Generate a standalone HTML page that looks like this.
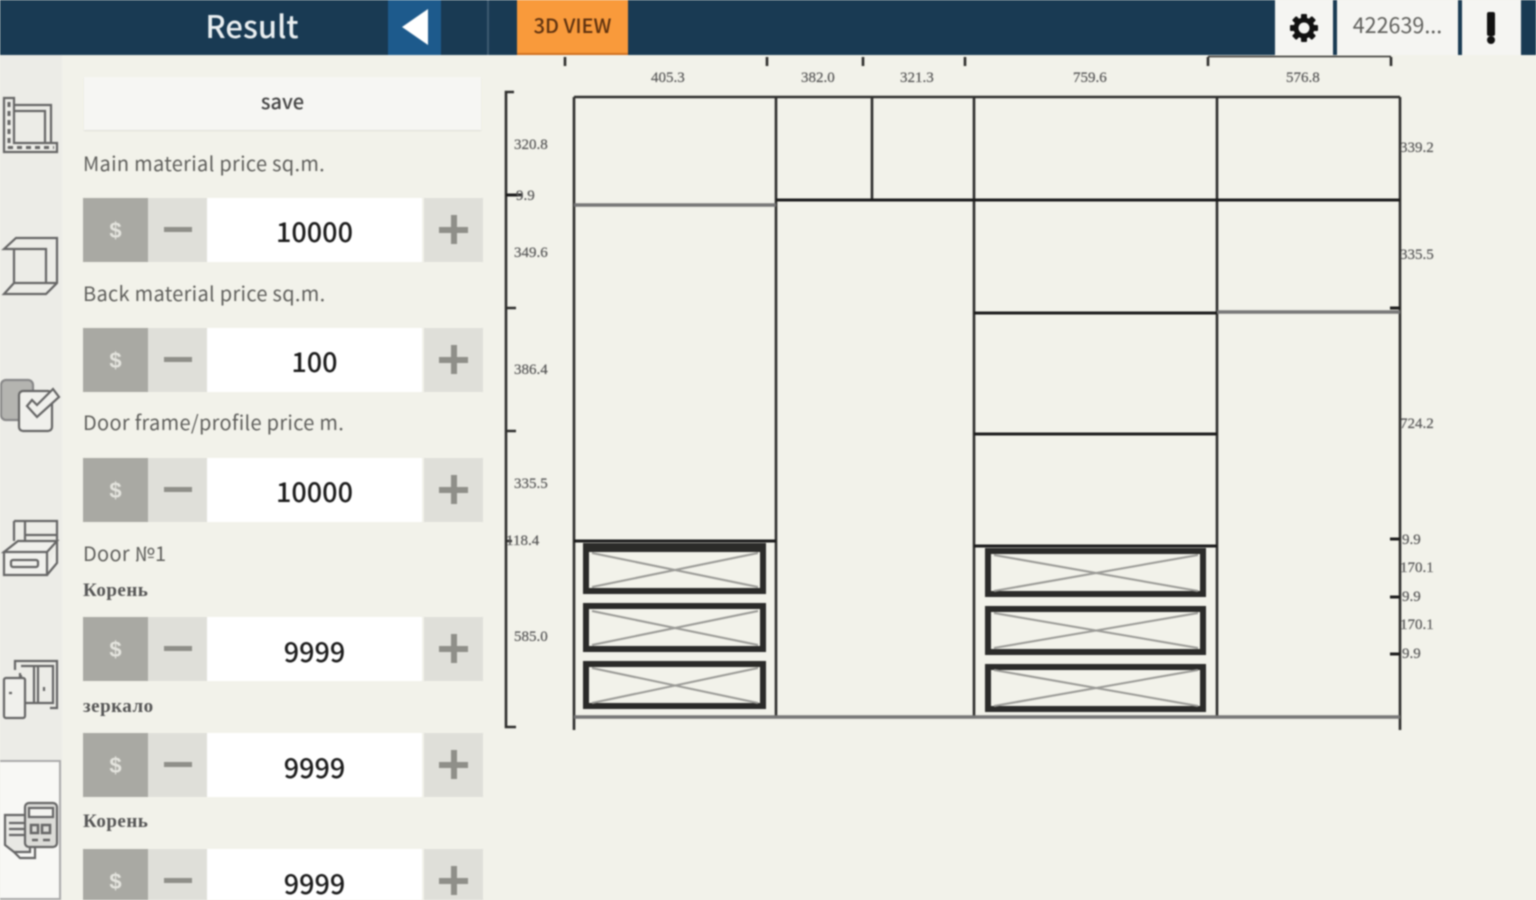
<!DOCTYPE html>
<html><head><meta charset="utf-8"><title>Result</title>
<style>
html,body{margin:0;padding:0;width:1536px;height:900px;overflow:hidden;background:#f2f2ea}
body{position:relative;font-family:"Noto Sans CJK JP","Liberation Sans",sans-serif}
#w{position:absolute;left:0;top:0;width:1536px;height:900px;overflow:hidden;filter:blur(.75px)}
.a{position:absolute}
.t{position:absolute;white-space:nowrap;color:#5f5f5c;font-size:20px;letter-spacing:.3px;line-height:26px;left:83px}
.c{position:absolute;white-space:nowrap;left:83px;color:#555;font:bold 19px/22px "Liberation Serif",serif;letter-spacing:.5px}
.s{position:absolute;left:83px;width:400px;height:64px}
.s i{position:absolute;top:0;height:64px;display:block;font-style:normal}
.d{left:0;width:65px;background:#a9a9a3;color:#e4e4de;font:bold 22px/66px "Liberation Sans",sans-serif;text-align:center}
.m{left:65px;width:59px;background:#dfdfd9}
.m:after{content:"";position:absolute;left:16px;top:29px;width:28px;height:5px;background:#8f8f89}
.v{left:124px;width:215px;background:#fff;color:#1c1c1c;font-size:27px;font-weight:500;line-height:66px;text-align:center}
.p{left:341px;width:59px;background:#dfdfd9}
.p:before{content:"";position:absolute;left:15px;top:29px;width:29px;height:6px;background:#8f8f89}
.p:after{content:"";position:absolute;left:27px;top:17px;width:6px;height:29px;background:#8f8f89}
.tab{position:absolute;top:0;height:55px;background:#f5f5f2}
svg text{font-family:"Liberation Serif",serif;font-size:15px;fill:#555;stroke:#666;stroke-width:.25}
</style></head><body><div id="w">

<div class="a" style="left:0;top:0;width:1536px;height:55px;background:#193a53"></div>
<div class="a" style="left:0;top:55px;width:62px;height:845px;background:#ecece7"></div>

<div class="a" style="left:140px;width:224px;top:0;height:50px;text-align:center;color:#e9eef0;font-size:31px;font-weight:500;line-height:50px">Result</div>
<div class="a" style="left:388px;top:0;width:53px;height:55px;background:#1d5a8c"></div>
<svg class="a" style="left:388px;top:0" width="53" height="54"><polygon points="14,27 40,9 40,45" fill="#fff"/></svg>
<div class="a" style="left:487px;top:0;width:2px;height:55px;background:#3d5a70"></div>
<div class="a" style="left:517px;top:0;width:111px;height:55px;background:#f99a3b;border-bottom:2px solid #d0701f;box-sizing:border-box;text-align:center;color:#5e3210;font-size:20px;line-height:49px;font-weight:500">3D VIEW</div>

<div class="tab" style="left:1275px;width:58px"></div>
<svg class="a" style="left:1289px;top:13px" width="30" height="30" viewBox="0 0 30 30"><g fill="#111"><circle cx="15" cy="15" r="10.5"/><rect x="12" y="1" width="6" height="28" rx="1"/><rect x="12" y="1" width="6" height="28" rx="1" transform="rotate(45 15 15)"/><rect x="12" y="1" width="6" height="28" rx="1" transform="rotate(90 15 15)"/><rect x="12" y="1" width="6" height="28" rx="1" transform="rotate(135 15 15)"/></g><circle cx="15" cy="15" r="5.5" fill="#f5f5f2"/></svg>
<div class="tab" style="left:1337px;width:121px;text-align:center;color:#5f5f5c;font-size:21.5px;line-height:49px">422639...</div>
<div class="tab" style="left:1462px;width:59px"></div>
<svg class="a" style="left:1462px;top:0" width="59" height="55"><rect x="25" y="12" width="8" height="24" rx="2" fill="#111"/><circle cx="29" cy="40" r="4" fill="#111"/></svg>

<div class="a" style="left:84px;top:77px;width:397px;height:53px;background:#f6f6f3;box-shadow:0 1px 1px #dcdcd6;text-align:center;color:#444;font-size:20px;font-weight:500;line-height:48px">save</div>

<div class="t" style="top:150px">Main material price sq.m.</div>
<div class="s" style="top:198px"><i class="d">$</i><i class="m"></i><i class="v">10000</i><i class="p"></i></div>
<div class="t" style="top:280px">Back material price sq.m.</div>
<div class="s" style="top:328px"><i class="d">$</i><i class="m"></i><i class="v">100</i><i class="p"></i></div>
<div class="t" style="top:409px">Door frame/profile price m.</div>
<div class="s" style="top:458px"><i class="d">$</i><i class="m"></i><i class="v">10000</i><i class="p"></i></div>
<div class="t" style="top:540px">Door №1</div>
<div class="c" style="top:580px">Корень</div>
<div class="s" style="top:617px"><i class="d">$</i><i class="m"></i><i class="v" style="line-height:68px">9999</i><i class="p"></i></div>
<div class="c" style="top:696px">зеркало</div>
<div class="s" style="top:733px"><i class="d">$</i><i class="m"></i><i class="v" style="line-height:68px">9999</i><i class="p"></i></div>
<div class="c" style="top:811px">Корень</div>
<div class="s" style="top:849px"><i class="d">$</i><i class="m"></i><i class="v" style="line-height:68px">9999</i><i class="p"></i></div>

<div class="a" style="left:0;top:760px;width:61px;height:140px;background:#f8f8f5;border:2px solid #aaa;border-left:0;box-sizing:border-box"></div>

<!-- sidebar icons -->
<svg class="a" style="left:0;top:90px" width="62" height="770" fill="none" stroke="#666" stroke-width="2.2">
  <path d="M4 8H14V53H57V62H4ZM14 15H51V53M14 21H45V52"/>
  <path d="M9 12V58M8 57.500H54" stroke-dasharray="5 4" stroke-width="3"/>
  <path d="M4 159L16 148H57V193L46 204H4L14 193H46V159ZM46 159H4M14 159V193M46 193H57"/>
  <rect x="1" y="290" width="32" height="40" rx="5" fill="#b4b4b0" stroke="#888"/>
  <rect x="19" y="301" width="33" height="40" rx="4" fill="#f0f0ec"/>
  <path d="M27 316L37 327L59 307L53 299L37 315L32 310Z" fill="#f0f0ec"/>
  <path d="M14 431H57V451M14 431V451M25 431V451M25 445H57"/>
  <path d="M4 462L18 451H57L47 462ZM4 462H47V485H4ZM47 485L57 473V451" fill="#f0f0ec"/>
  <rect x="11" y="470" width="27" height="7" rx="2"/>
  <path d="M15 580V571H57V618H50M21 576H53V613H21V585M34 576V613M38 576V613" />
  <rect x="4" y="588" width="21" height="40" rx="2" fill="#f0f0ec"/>
  <path d="M9 603H12M44 597V601M20 588V583"/>
  <path d="M5 725H30V762H14L5 755Z" fill="#e8e8e4"/>
  <path d="M9 733H26M9 739H26M9 745H26" />
  <rect x="25" y="713" width="32" height="44" rx="4" fill="#dcdcd8"/>
  <rect x="29" y="718" width="24" height="9" fill="#f4f4f0"/>
  <path d="M31 735H38V743H31ZM42 735H50V743H42ZM32 750H38M43 750H50" stroke-width="2.500"/>
  <path d="M14 762L20 768H35V757"/>
</svg>

<!-- drawing -->
<svg class="a" style="left:0;top:0" width="1536" height="900">
  <g stroke="#2e2e2c" stroke-width="2.6" fill="none">
    <path d="M565 57V66M767 57V66M863 57V66M965 57V66M1208 57V66M1391 57V66"/>
    <path d="M1208 56.500H1391" stroke-width="1.500"/>
    <path d="M514 92H506V727H516M506 195H516M506 308H516M506 431H516M506 541H512"/>
    <path d="M574 97H1400M574 97V730M776 97V717M872 97V200M974 97V717M1217 97V717M1400 97V730"/>
    <path d="M776 200H1400M974 313H1217M974 434H1217M574 541H776M974 546H1217M1390 308H1400M1390 539H1400M1390 597H1400M1390 654H1400M506 195H522" stroke="#1c1c1c" stroke-width="3"/>
    <path d="M574 205H776M1217 312H1400M574 717H1400" stroke="#777" stroke-width="3.500"/>
  </g>
  <g fill="none" stroke="#2b2b29" stroke-width="6">
    <rect x="586" y="546" width="177" height="45"/><rect x="586" y="606" width="177" height="43"/><rect x="586" y="664" width="177" height="42"/>
    <rect x="988" y="551" width="215" height="43"/><rect x="988" y="609" width="215" height="43"/><rect x="988" y="667" width="215" height="42"/>
  </g>
  <path d="M583 543H766V552H583Z" fill="#2b2b29"/>
  <g stroke="#9a9a96" stroke-width="2">
    <path d="M592 553L758 587M758 553L592 587M592 611L758 645M758 611L592 645M592 668L758 703M758 668L592 703"/>
    <path d="M994 555L1198 591M1198 555L994 591M994 613L1198 648M1198 613L994 648M994 670L1198 706M1198 670L994 706"/>
  </g>
  <text x="651" y="82">405.3</text><text x="801" y="82">382.0</text><text x="900" y="82">321.3</text><text x="1073" y="82">759.6</text><text x="1286" y="82">576.8</text>
  <text x="514" y="149">320.8</text><text x="516" y="200">9.9</text><text x="514" y="257">349.6</text><text x="514" y="374">386.4</text><text x="514" y="488">335.5</text><text x="506" y="545">118.4</text><text x="514" y="641">585.0</text>
  <text x="1400" y="152">339.2</text><text x="1400" y="259">335.5</text><text x="1400" y="428">724.2</text><text x="1402" y="544">9.9</text><text x="1400" y="572">170.1</text><text x="1402" y="601">9.9</text><text x="1400" y="629">170.1</text><text x="1402" y="658">9.9</text>
</svg>
</div></body></html>
